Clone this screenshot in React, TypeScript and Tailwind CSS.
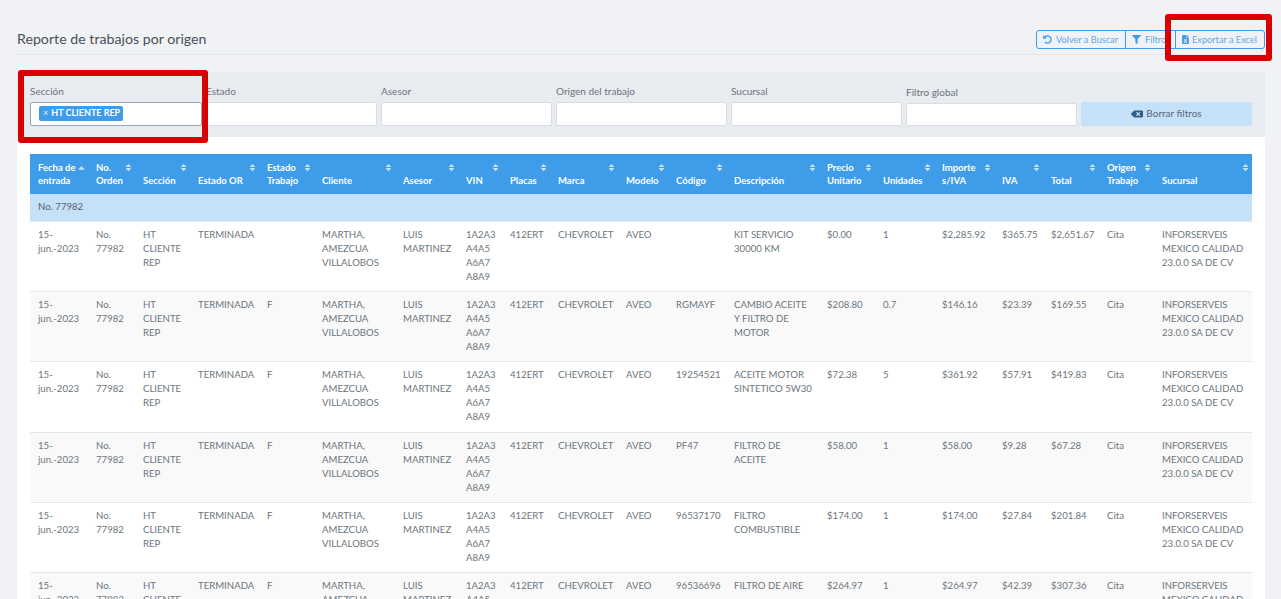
import { FaBackspace, FaFileExcel, FaFilter, FaSort, FaSortUp, FaUndoAlt } from "react-icons/fa";

const columns = [
  { label: "Fecha de entrada", width: "w-[58px]" },
  { label: "No. Orden", width: "w-[47px]" },
  { label: "Sección", width: "w-[55px]" },
  { label: "Estado OR", width: "w-[69px]" },
  { label: "Estado Trabajo", width: "w-[55px]" },
  { label: "Cliente", width: "w-[81px]" },
  { label: "Asesor", width: "w-[63px]" },
  { label: "VIN", width: "w-[44px]" },
  { label: "Placas", width: "w-[48px]" },
  { label: "Marca", width: "w-[68px]" },
  { label: "Modelo", width: "w-[50px]" },
  { label: "Código", width: "w-[58px]" },
  { label: "Descripción", width: "w-[93px]" },
  { label: "Precio Unitario", width: "w-[56px]" },
  { label: "Unidades", width: "w-[59px]" },
  { label: "Importe s/IVA", width: "w-[60px]" },
  { label: "IVA", width: "w-[49px]" },
  { label: "Total", width: "w-[56px]" },
  { label: "Origen Trabajo", width: "w-[55px]" },
  { label: "Sucursal", width: "w-[98px]" },
];

const rows = [
  { h: "h-[70px]", trabajo: "", codigo: "", desc: "KIT SERVICIO 30000 KM", precio: "$0.00", unidades: "1", importe: "$2,285.92", iva: "$365.75", total: "$2,651.67" },
  { h: "h-[70px]", trabajo: "F", codigo: "RGMAYF", desc: "CAMBIO ACEITE Y FILTRO DE MOTOR", precio: "$208.80", unidades: "0.7", importe: "$146.16", iva: "$23.39", total: "$169.55" },
  { h: "h-[71px]", trabajo: "F", codigo: "19254521", desc: "ACEITE MOTOR SINTETICO 5W30", precio: "$72.38", unidades: "5", importe: "$361.92", iva: "$57.91", total: "$419.83" },
  { h: "h-[70px]", trabajo: "F", codigo: "PF47", desc: "FILTRO DE ACEITE", precio: "$58.00", unidades: "1", importe: "$58.00", iva: "$9.28", total: "$67.28" },
  { h: "h-[70px]", trabajo: "F", codigo: "96537170", desc: "FILTRO COMBUSTIBLE", precio: "$174.00", unidades: "1", importe: "$174.00", iva: "$27.84", total: "$201.84" },
  { h: "h-[70px]", trabajo: "F", codigo: "96536696", desc: "FILTRO DE AIRE", precio: "$264.97", unidades: "1", importe: "$264.97", iva: "$42.39", total: "$307.36" },
];

const filters = ["Estado", "Asesor", "Origen del trabajo", "Sucursal"];

function Td({ children, tight }: { children?: React.ReactNode; tight?: boolean }) {
  return <td className={`${tight ? "pr-[5.5px] pl-2" : "px-2"} pt-[6px] align-top`}>{children}</td>;
}

export default function App() {
  return (
    <div className="relative h-screen overflow-hidden bg-[#f0f2f6] pr-[16px] pl-[17px] font-['Lato','Noto_Sans',sans-serif] text-[10px] text-[#6c757d]">
      <div className="flex h-[55px] items-end justify-between border-b border-[#e4e7ec] pb-[5px]">
        <h1 className="text-[14.2px] leading-[20px] text-[#4a5058]">Reporte de trabajos por origen</h1>
        <div className="flex h-[19px] w-[229px] items-stretch rounded-[3px] border border-[#3e9ce9] text-[9.2px] text-[#5fa8e8]">
          <button className="flex w-[89px] items-center gap-[4px] border-r border-[#3e9ce9] pl-[6px]">
            <FaUndoAlt className="size-[9px] text-[#3e9ce9]" />
            Volver a Buscar
          </button>
          <button className="flex w-[50px] items-center gap-[4px] border-r border-[#3e9ce9] pl-[6px]">
            <FaFilter className="size-[9px] text-[#3e9ce9]" />
            Filtro
          </button>
          <button className="flex flex-1 items-center gap-[2px] pl-[5px]">
            <FaFileExcel className="size-[9px] text-[#3e9ce9]" />
            Exportar a Excel
          </button>
        </div>
      </div>

      <div className="mt-[17px] flex h-[65px] gap-1 bg-[#e8ebef] px-[13px] pt-[13px]">
        <div className="w-[172px]">
          <div className="h-[17px] leading-[13px]">Sección</div>
          <div className="h-[24px] rounded-[2px] border border-[#9aa5b5] bg-white pt-[3px] pl-2">
            <span className="flex h-[15px] w-[84px] items-start gap-[3px] rounded-[2px] bg-[#3e9ce9] pl-1 text-[9px] leading-[14px] font-bold text-white">
              <span className="text-[#c5e1f7]">×</span>
              HT CLIENTE REP
            </span>
          </div>
        </div>
        {filters.map((f) => (
          <div key={f} className="w-[171px]">
            <div className="h-[17px] leading-[13px]">{f}</div>
            <div className="h-[24px] rounded-[2px] border border-[#d8dce3] bg-white" />
          </div>
        ))}
        <div className="w-[171px] pt-[1px]">
          <div className="h-[17px] leading-[13px]">Filtro global</div>
          <div className="h-[23px] rounded-[2px] border border-[#d8dce3] bg-white" />
        </div>
        <button className="mt-[17px] flex h-[24px] w-[171px] items-center justify-center gap-[3px] rounded-[2px] bg-[#c5e1f7] pb-[1px] text-[#56677a]">
          <FaBackspace className="size-[12px] text-[#2f5f86]" />
          Borrar filtros
        </button>
      </div>

      <div className="bg-white px-[13px] pt-[17px]">
        <table className="w-[1222px] table-fixed border-collapse text-[9.6px]">
          <colgroup>
            {columns.map((c) => (
              <col key={c.label} className={c.width} />
            ))}
          </colgroup>
          <thead>
            <tr className="h-[40px] bg-[#3e9ce9] text-[9.5px] text-white">
              {columns.map((c, i) => (
                <th key={c.label} className="relative px-2 pb-[7px] text-left align-bottom font-bold leading-[13px]">
                  {c.label}
                  {i === 0 ? (
                    <span className="absolute top-[11px] right-[1px] text-[#c5e1f7]">
                      <FaSortUp className="size-[11px]" />
                    </span>
                  ) : (
                    <span className="absolute top-[9px] right-[2px] text-[#c5e1f7]">
                      <FaSort className="size-[9px]" />
                    </span>
                  )}
                </th>
              ))}
            </tr>
          </thead>
          <tbody className="leading-[14px]">
            <tr className="h-[27px] bg-[#c5e1f7] text-[#56606c]">
              <td colSpan={20} className="px-2">No. 77982</td>
            </tr>
            {rows.map((r, i) => (
              <tr key={i} className={`${r.h} border-t border-[#e4e7ec] ${i % 2 ? "bg-[#f9f9f9]" : "bg-white"}`}>
                <Td>15- jun.-2023</Td>
                <Td>No. 77982</Td>
                <Td>HT CLIENTE REP</Td>
                <Td>TERMINADA</Td>
                <Td>{r.trabajo}</Td>
                <Td>MARTHA, AMEZCUA VILLALOBOS</Td>
                <Td>LUIS MARTINEZ</Td>
                <Td>1A2A3 A4A5 A6A7 A8A9</Td>
                <Td>412ERT</Td>
                <Td>CHEVROLET</Td>
                <Td>AVEO</Td>
                <Td>{r.codigo}</Td>
                <Td tight>{r.desc}</Td>
                <Td>{r.precio}</Td>
                <Td>{r.unidades}</Td>
                <Td>{r.importe}</Td>
                <Td>{r.iva}</Td>
                <Td>{r.total}</Td>
                <Td>Cita</Td>
                <Td tight>INFORSERVEIS MEXICO CALIDAD 23.0.0 SA DE CV</Td>
              </tr>
            ))}
          </tbody>
        </table>
      </div>

      {/* marcas rojas encima de la captura */}
      <div className="absolute top-[70px] left-[18px] h-[73px] w-[190px] rounded-[3px] border-[6px] border-[#d90000]" />
      <div className="absolute top-[14px] left-[1165px] h-[47px] w-[107px] rounded-[3px] border-[6px] border-[#d90000]" />
    </div>
  );
}
